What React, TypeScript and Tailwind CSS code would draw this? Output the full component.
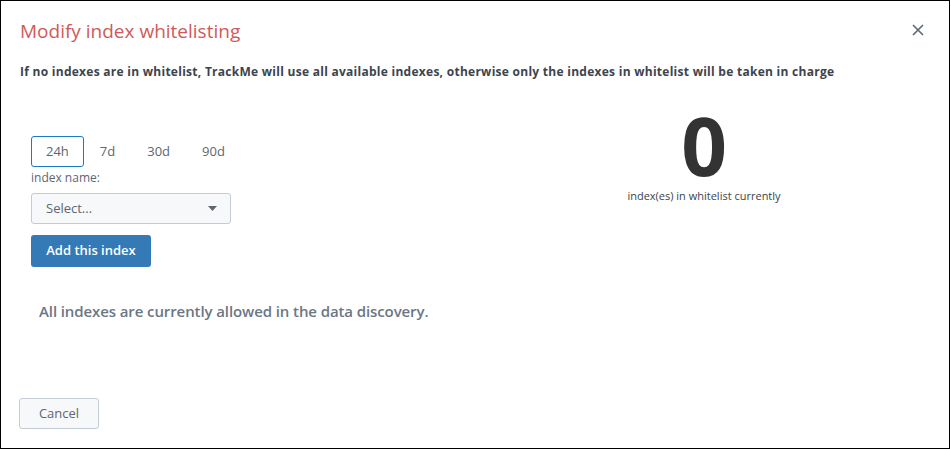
import React from "react";

const ranges = ["24h", "7d", "30d", "90d"];

export default function App() {
  return (
    <div
      className="w-[950px] h-[449px] border border-black bg-white flex flex-col text-[#3c444d]"
      style={{ fontFamily: "'Open Sans', Lato, sans-serif" }}
    >
      {/* Header */}
      <div className="flex items-start justify-between pl-[19px] pr-[25px] pt-[17px]">
        <h3 className="text-[19px] leading-[26px] text-[#d05a5a]">Modify index whitelisting</h3>
        <button className="mt-[6px] text-[#5c6773]">
          <svg width="12" height="12" viewBox="0 0 12 12" fill="none" stroke="currentColor" strokeWidth="1.6">
            <path d="M1 1L11 11M11 1L1 11" />
          </svg>
        </button>
      </div>

      <p className="pl-[19px] mt-[20px] text-[12px] leading-[16px] font-bold tracking-[0.27px] text-[#3c444d]">
        If no indexes are in whitelist, TrackMe will use all available indexes, otherwise only the indexes in whitelist will be taken in charge
      </p>

      {/* Body */}
      <div className="flex mt-[56px] pl-[30px]">
        <div className="w-[460px] flex flex-col">
          <div className="flex items-center">
            {ranges.map((r, i) => (
              <button
                key={r}
                className={
                  i === 0
                    ? "h-[31px] px-[14px] rounded-[3px] border border-[#1a7bc4] text-[13px] text-[#5c6773]"
                    : "h-[31px] px-[15px] border border-transparent text-[13px] text-[#5c6773]"
                }
              >
                {r}
              </button>
            ))}
          </div>
          <label className="mt-[2px] text-[12px] leading-[18px] text-[#5c6773]">index name:</label>
          <div className="mt-[6px] w-[200px] h-[31px] rounded-[3px] border border-[#c3cbd4] bg-[#f7f8fa] flex items-center justify-between pl-[14px] pr-[13px]">
            <span className="text-[13px] text-[#5c6773]">Select...</span>
            <svg width="9" height="5" viewBox="0 0 9 5" fill="#5c6773">
              <path d="M0 0h9L4.5 5z" />
            </svg>
          </div>
          <button className="mt-[11px] w-[120px] h-[32px] rounded-[3px] bg-[#337ab7] text-white text-[13px] font-semibold">
            Add this index
          </button>
          <p className="mt-[33px] ml-[8px] text-[15px] font-semibold tracking-[-0.1px] text-[#6b7785]">
            All indexes are currently allowed in the data discovery.
          </p>
        </div>
        <div className="flex-1 flex flex-col items-center -mt-[21px] pr-[32px]">
          <div className="text-[80px] leading-[60px] font-bold text-[#333333]">0</div>
          <div className="mt-[13px] text-[11px] leading-[16px] text-[#3c444d]">index(es) in whitelist currently</div>
        </div>
      </div>

      {/* Footer */}
      <div className="mt-auto pl-[18px] pb-[19px]">
        <button className="w-[80px] h-[31px] rounded-[3px] border border-[#c3cbd4] bg-[#f7f8fa] text-[13px] text-[#5c6773]">
          Cancel
        </button>
      </div>
    </div>
  );
}
